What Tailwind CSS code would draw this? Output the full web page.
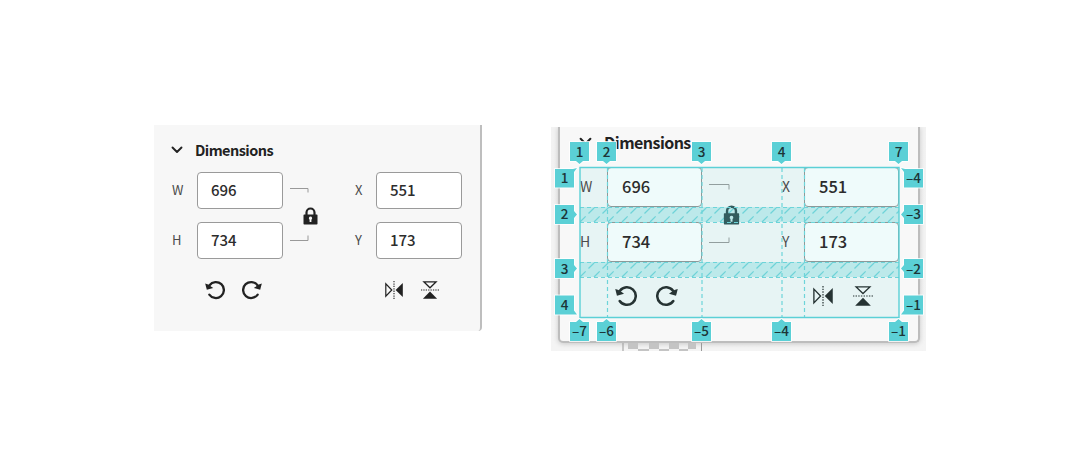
<!DOCTYPE html>
<html lang="en">
<head>
<meta charset="utf-8">
<title>Dimensions</title>
<script src="https://cdn.jsdelivr.net/npm/@tailwindcss/browser@4"></script>
</head>
<body class="w-[1080px] h-[475px] bg-white overflow-hidden font-['Noto_Sans_CJK_JP',sans-serif] text-[#2c2c2c]">
<svg class="hidden">
  <symbol id="chev" viewBox="0 0 12 8"><path d="M1.5 1.5 6 6l4.500-4.500" fill="none" stroke="#222" stroke-width="1.900" stroke-linecap="round" stroke-linejoin="round"/></symbol>
  <symbol id="ccw" viewBox="0 0 20 20"><path d="M4.300 14.600A8 8 0 1 0 4.500 5.200" fill="none" stroke="currentColor" stroke-width="2.300" stroke-linecap="round"/><path d="M.2 3.600 1.800 9.700 8.200 7.900 6 6.400 3.200 4.500Z" fill="currentColor"/></symbol>
  <symbol id="lock" viewBox="0 0 14 18"><path d="M3 8V5.500a4 4 0 0 1 8 0V8" fill="none" stroke="currentColor" stroke-width="2.200"/><path fill-rule="evenodd" d="M.8 7.500h12.400q.8 0 .8.800V16.700q0 .8-.8.800H.8Q0 17.500 0 16.700V8.300Q0 7.500.8 7.500ZM7 9.600a1.700 1.700 0 0 0-.9 3.100V15h1.800v-2.300A1.700 1.700 0 0 0 7 9.600Z" fill="currentColor"/></symbol>
  <symbol id="flip" viewBox="0 0 18 18"><path d="M.8 2.800v12.400l6-6.200Z" fill="none" stroke="currentColor" stroke-width="1.200"/><path d="M17.800 1.900v14.200L10.600 9Z" fill="currentColor"/><path d="M9 0v18" stroke="currentColor" stroke-width="1.100" stroke-dasharray="1.300 1.100"/></symbol>
</svg>
<main class="relative flex items-start">
  <section class="ml-[154px] mt-[125px] w-[328px] h-[206px] bg-[#f7f7f7] border-r-2 border-[#bebebe] rounded-br-[4px]">
    <header class="flex items-center h-[47px] pl-[17px] pt-[3px] gap-3">
      <svg class="w-3 h-2"><use href="#chev"/></svg>
      <h2 class="text-[14.500px] leading-5 font-bold text-[#222] tracking-[-0.55px]">Dimensions</h2>
    </header>
    <div class="grid grid-cols-[25px_86px_72px_21px_86px] grid-rows-[37px_37px_36px] gap-y-[13px] pl-[18px] items-center text-[15px] leading-5">
      <span class="text-[13px] text-[#4b4b4b] pb-[2px]">W</span>
      <div class="h-[37px] border border-[#9a9a9a] rounded-[4px] bg-white pl-[13px] pb-[2px] flex items-center font-medium">696</div>
      <svg class="w-[72px] h-[37px] overflow-visible" fill="none" stroke="#999"><path d="M7 16.500h18v4"/></svg>
      <span class="text-[13px] text-[#4b4b4b] pb-[2px]">X</span>
      <div class="h-[37px] border border-[#9a9a9a] rounded-[4px] bg-white pl-[13px] pb-[2px] flex items-center font-medium">551</div>
      <span class="text-[13px] text-[#4b4b4b] pb-[2px]">H</span>
      <div class="h-[37px] border border-[#9a9a9a] rounded-[4px] bg-white pl-[13px] pb-[2px] flex items-center font-medium">734</div>
      <div class="relative h-[37px]">
        <svg class="w-[72px] h-[37px]" fill="none" stroke="#999"><path d="M7 18.500h18v-5"/></svg>
        <svg class="absolute left-5 -top-[15px] w-[15px] h-[18px] text-[#222]"><use href="#lock"/></svg>
      </div>
      <span class="text-[13px] text-[#4b4b4b] pb-[2px]">Y</span>
      <div class="h-[37px] border border-[#9a9a9a] rounded-[4px] bg-white pl-[13px] pb-[2px] flex items-center font-medium">173</div>
      <div class="col-start-2 flex gap-[17px] pl-[8px] text-[#222]">
        <svg class="w-5 h-5"><use href="#ccw"/></svg>
        <svg class="w-5 h-5 -scale-x-100"><use href="#ccw"/></svg>
      </div>
      <div class="col-start-5 flex gap-[18px] pl-[9px] text-[#222]">
        <svg class="w-[18px] h-[18px]"><use href="#flip"/></svg>
        <svg class="w-[18px] h-[18px] rotate-90"><use href="#flip"/></svg>
      </div>
    </div>
  </section>

  <section class="relative ml-[69px] mt-[127px] w-[375px] h-[224px] bg-gradient-to-b from-[#f2f2f2] to-[#f4f4f4] pl-[7px] overflow-hidden">
    <div class="w-[362px] h-[216px] bg-[#f8f8f8] border-x-2 border-b-2 border-[#bdbdbd] rounded-b-[5px] shadow-[0_1px_5px_rgba(0,0,0,.18)]">
      <header class="flex items-center h-10 pl-[19px] pb-[11px] gap-[12px]">
        <svg class="w-[13px] h-[9px]"><use href="#chev"/></svg>
        <h2 class="text-[16px] leading-5 font-bold text-[#222] tracking-[-0.55px]">Dimensions</h2>
      </header>
      <div class="ml-[20px] w-[319px] h-[151px] bg-[#e7f4f4] grid grid-cols-[27px_95px_80px_22px_95px] grid-rows-[40px_40px_41px] gap-y-[15px] items-center text-[16.500px] leading-5">
        <span class="text-[14px] text-[#4b4b4b] pb-[3px]">W</span>
        <div class="h-[40px] border border-[#8d9999] rounded-[4px] bg-[#effbfb] pl-[14px] pb-[3px] flex items-center font-medium">696</div>
        <svg class="w-20 h-10" fill="none" stroke="#929e9e"><path d="M7 17.500h20v5"/></svg>
        <span class="text-[14px] text-[#4b4b4b] pb-[3px]">X</span>
        <div class="h-[40px] border border-[#8d9999] rounded-[4px] bg-[#effbfb] pl-[14px] pb-[3px] flex items-center font-medium">551</div>
        <span class="text-[14px] text-[#4b4b4b] pb-[3px]">H</span>
        <div class="h-[40px] border border-[#8d9999] rounded-[4px] bg-[#effbfb] pl-[14px] pb-[3px] flex items-center font-medium">734</div>
        <svg class="w-20 h-10" fill="none" stroke="#929e9e"><path d="M7 20.500h20v-5"/></svg>
        <span class="text-[14px] text-[#4b4b4b] pb-[3px]">Y</span>
        <div class="h-[40px] border border-[#8d9999] rounded-[4px] bg-[#effbfb] pl-[14px] pb-[3px] flex items-center font-medium">173</div>
        <div class="col-start-2 flex gap-[19px] pl-[8px] pb-1 text-[#263333]">
          <svg class="w-[22px] h-[22px]"><use href="#ccw"/></svg>
          <svg class="w-[22px] h-[22px] -scale-x-100"><use href="#ccw"/></svg>
        </div>
        <div class="col-start-5 flex gap-5 pl-[9px] pb-1 text-[#263333]">
          <svg class="w-5 h-5"><use href="#flip"/></svg>
          <svg class="w-5 h-5 rotate-90"><use href="#flip"/></svg>
        </div>
      </div>
    </div>
    <svg class="w-[90px] h-[9px] ml-[64px]"><path d="M1 0v9M79.500 0v9" stroke="#999"/><path d="M6 0h10v6H6zM27 0h10v6H27zM47 0h10v6H47zM66 0h8v6h-8zM16 6h11v2H16zM37 6h10v2H37zM57 6h9v2h-9z" fill="#c4c4c4"/></svg>
  </section>

  <!-- Grid inspector overlay -->
  <svg class="absolute left-0 top-0 w-[1080px] h-[475px]" fill="none">
    <defs><pattern id="hatch" width="14" height="55" patternUnits="userSpaceOnUse" x="580" y="207"><path d="M0 15 15 0M-14 15 1 0M14 15 29 0" stroke="#6fd3d8" stroke-width="1.300" stroke-dasharray="8 4"/></pattern></defs>
    <path d="M580 207h319v15H580zM580 262h319v15H580z" fill="#bce9ea"/>
    <path d="M580 207h319v15H580zM580 262h319v15H580z" fill="url(#hatch)"/>
    <use href="#lock" x="723.500" y="205" width="16" height="20" color="#325c5e"/>
    <path d="M580 207.500h319M580 222.500h319M580 262.500h319M580 277.500h319M607.500 168v149M702 168v149M782 168v149M804.500 168v149" stroke="#6dd4d9" stroke-width="1.200" stroke-dasharray="4 3"/>
    <path d="M580 167.500h319v150H580z" stroke="#5bd0d6" stroke-width="1.400"/>
    <g fill="#5bd0d6" stroke="#fff" stroke-opacity=".8" stroke-width="2" paint-order="stroke" stroke-linejoin="round">
      <path id="d" d="M570 142h19v19h-6l-3.500 3-3.500-3h-6z"/><use href="#d" x="27"/><use href="#d" x="122"/><use href="#d" x="202"/><use href="#d" x="319"/>
      <path id="u" d="M570 322h6l3.500-3 3.500 3h6v19h-19z"/><use href="#u" x="27"/><use href="#u" x="122"/><use href="#u" x="202"/><use href="#u" x="319"/>
      <path d="M555 169h18l4-1-3 4v15.500h-19zM555 205h19v6l3 3.500-3 3.500v6h-19zM555 259h19v6l3 3.500-3 3.500v6h-19zM555 295.500h19v15l3 4h-22z"/>
      <path d="M923 169h-18l-4-1 3 4v15.500h19zM923 205h-19v6l-3 3.500 3 3.500v6h19zM923 259h-19v6l-3 3.500 3 3.500v6h19zM923 295.500h-19v15l-3 4h22z"/>
    </g>
    <g class="text-[13.500px] font-medium" fill="#1d3537" text-anchor="middle">
      <text x="579.500" y="157">1</text><text x="606.500" y="157">2</text><text x="701.500" y="157">3</text><text x="781.500" y="157">4</text><text x="898.500" y="157">7</text>
      <text x="564.500" y="183">1</text><text x="564.500" y="219">2</text><text x="564.500" y="274">3</text><text x="564.500" y="310">4</text>
      <text x="913.500" y="183">–4</text><text x="913.500" y="219">–3</text><text x="913.500" y="274">–2</text><text x="913.500" y="310">–1</text>
      <text x="579.500" y="336">–7</text><text x="606.500" y="336">–6</text><text x="701.500" y="336">–5</text><text x="781.500" y="336">–4</text><text x="898.500" y="336">–1</text>
    </g>
  </svg>
</main>
</body>
</html>
